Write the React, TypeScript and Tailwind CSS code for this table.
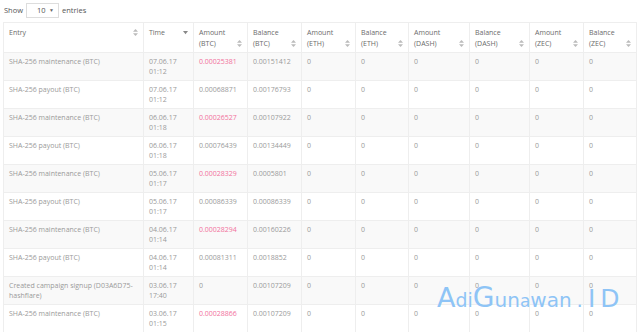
import React from 'react';

type Row = {
  entry: React.ReactNode;
  date: string;
  time: string;
  amount: string;
  balance: string;
  fee?: boolean;
};

const rows: Row[] = [
  { entry: 'SHA-256 maintenance (BTC)', date: '07.06.17', time: '01:12', amount: '0.00025381', balance: '0.00151412', fee: true },
  { entry: 'SHA-256 payout (BTC)', date: '07.06.17', time: '01:12', amount: '0.00068871', balance: '0.00176793' },
  { entry: 'SHA-256 maintenance (BTC)', date: '06.06.17', time: '01:18', amount: '0.00026527', balance: '0.00107922', fee: true },
  { entry: 'SHA-256 payout (BTC)', date: '06.06.17', time: '01:18', amount: '0.00076439', balance: '0.00134449' },
  { entry: 'SHA-256 maintenance (BTC)', date: '05.06.17', time: '01:17', amount: '0.00028329', balance: '0.0005801', fee: true },
  { entry: 'SHA-256 payout (BTC)', date: '05.06.17', time: '01:17', amount: '0.00086339', balance: '0.00086339' },
  { entry: 'SHA-256 maintenance (BTC)', date: '04.06.17', time: '01:14', amount: '0.00028294', balance: '0.00160226', fee: true },
  { entry: 'SHA-256 payout (BTC)', date: '04.06.17', time: '01:14', amount: '0.00081311', balance: '0.0018852' },
  {
    entry: (
      <>
        <span className="whitespace-nowrap">Created campaign signup (D03A6D75-</span>
        <br />
        hashflare)
      </>
    ),
    date: '03.06.17',
    time: '17:40',
    amount: '0',
    balance: '0.00107209',
  },
  { entry: 'SHA-256 maintenance (BTC)', date: '03.06.17', time: '01:15', amount: '0.00028866', balance: '0.00107209', fee: true },
  { entry: 'SHA-256 payout (BTC)', date: '03.06.17', time: '01:15', amount: '0.00079112', balance: '0.00136075' },
];

const widths = [140, 50, 54, 54, 54, 53, 61, 60, 54, 53];

/* ─── Sort icons ─── */

function SortBoth() {
  return (
    <svg width="5" height="7" viewBox="0 0 5 7" className="shrink-0">
      <path d="M2.5 0 L5 2.7 H0 Z" fill="#bbb" />
      <path d="M2.5 7 L5 4.3 H0 Z" fill="#bbb" />
    </svg>
  );
}

function SortDesc() {
  return (
    <svg width="5" height="4" viewBox="0 0 5 4" className="shrink-0">
      <path d="M0 0 H5 L2.5 3.2 Z" fill="#888" />
    </svg>
  );
}

function HeadCell({ lines, desc }: { lines: string[]; desc?: boolean }) {
  return (
    <th className="border border-[#eeeeee] px-[5px] pt-[4px] pb-[3px] align-top text-left font-normal text-[#6b6b6b]">
      <div className="flex items-end justify-between gap-1">
        <div className="leading-[11px]">
          {lines.map((l, i) => (
            <div key={i}>{l}</div>
          ))}
        </div>
        <div className="flex h-[11px] items-center">{desc ? <SortDesc /> : <SortBoth />}</div>
      </div>
    </th>
  );
}

const cell = 'border border-[#eeeeee] px-[5px] pt-[4px] pb-[3px] align-top leading-[10px]';

export default function App() {
  const heads: { lines: string[]; desc?: boolean }[] = [
    { lines: ['Entry'] },
    { lines: ['Time'], desc: true },
    { lines: ['Amount', '(BTC)'] },
    { lines: ['Balance', '(BTC)'] },
    { lines: ['Amount', '(ETH)'] },
    { lines: ['Balance', '(ETH)'] },
    { lines: ['Amount', '(DASH)'] },
    { lines: ['Balance', '(DASH)'] },
    { lines: ['Amount', '(ZEC)'] },
    { lines: ['Balance', '(ZEC)'] },
  ];

  return (
    <div className="relative h-[332px] overflow-hidden bg-white px-[3px] text-[7px] font-['Open_Sans',sans-serif]">
      {/* Length selector */}
      <div className="flex h-[22px] items-center gap-[3px] pb-[1px] text-[7.5px] text-[#555]">
        <span className="pl-[1px]">Show</span>
        <div className="flex h-[15px] w-[33px] items-center justify-between border border-[#ddd] bg-white pl-[10px] pr-[4px] text-[#555]">
          <span>10</span>
          <span className="text-[5px] text-[#666]">▼</span>
        </div>
        <span>entries</span>
      </div>

      <table className="table-fixed border-collapse" style={{ width: 633 }}>
        <colgroup>
          {widths.map((w, i) => (
            <col key={i} style={{ width: w }} />
          ))}
        </colgroup>
        <thead>
          <tr className="h-[28px]">
            {heads.map((h, i) => (
              <HeadCell key={i} lines={h.lines} desc={h.desc} />
            ))}
          </tr>
        </thead>
        <tbody className="text-[#9a9a9a]">
          {rows.map((r, ri) => (
            <tr key={ri} className={`h-[28px] ${ri % 2 === 0 ? 'bg-[#f9f9f9]' : 'bg-white'}`}>
              <td className={cell}>{r.entry}</td>
              <td className={cell}>
                {r.date}
                <br />
                {r.time}
              </td>
              <td className={`${cell} ${r.fee ? 'text-[#f2719c]' : ''}`}>{r.amount}</td>
              <td className={cell}>{r.balance}</td>
              {Array.from({ length: 6 }).map((_, ci) => (
                <td key={ci} className={cell}>
                  0
                </td>
              ))}
            </tr>
          ))}
        </tbody>
      </table>

      {/* Watermark */}
      <div className="pointer-events-none absolute left-[437px] top-[284px] flex items-baseline font-['DejaVu_Sans',sans-serif] text-[#8ec4f6]">
        <span className="text-[27px] leading-none">A</span>
        <span className="text-[19px] leading-none">di</span>
        <span className="text-[28px] leading-none">G</span>
        <span className="text-[20px] leading-none">un</span>
        <span className="text-[17px] leading-none">a</span>
        <span className="text-[20px] leading-none">wan</span>
        <span className="mx-[5px] text-[20px] leading-none">.</span>
        <span className="text-[25px] leading-none">I</span>
        <span className="ml-[5px] text-[25px] leading-none">D</span>
      </div>
    </div>
  );
}
